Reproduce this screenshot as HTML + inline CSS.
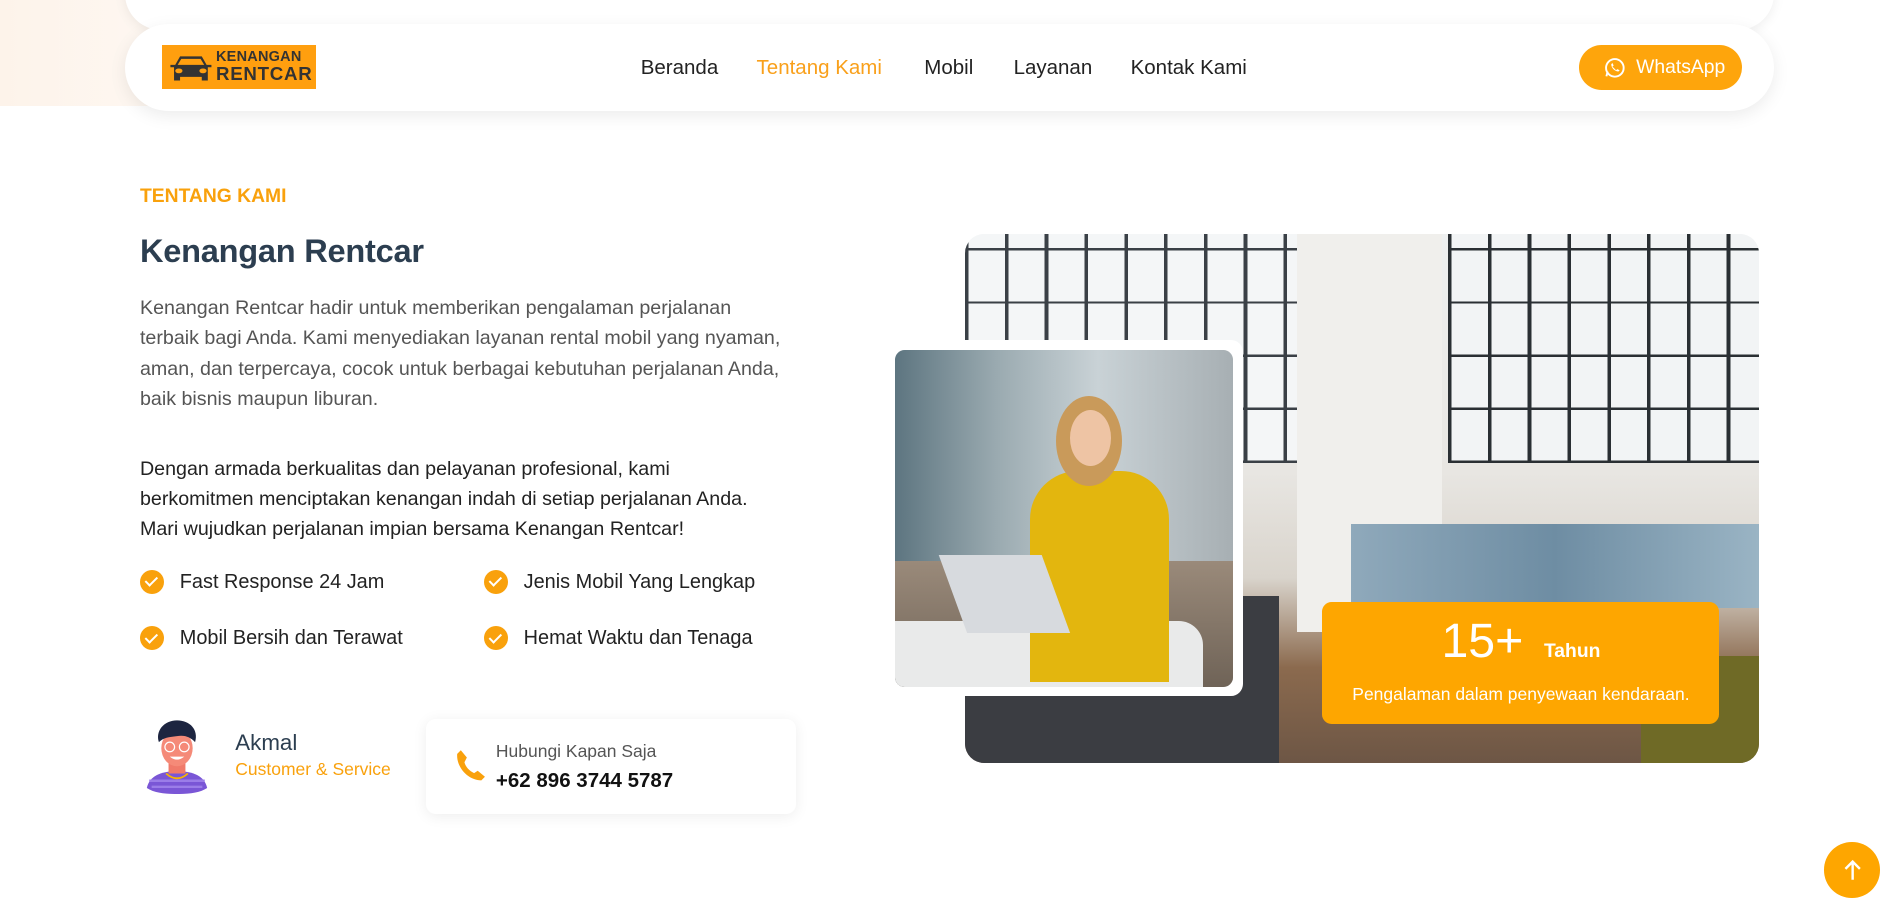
<!DOCTYPE html>
<html><head><meta charset="utf-8"><style>
*{margin:0;padding:0;box-sizing:border-box}
html,body{width:1892px;height:915px;overflow:hidden;background:#fff}
#w{zoom:1.20663;width:1568px;height:759px;position:relative;font-family:"Liberation Sans",sans-serif;overflow:hidden}
.a{position:absolute}
.nav a{position:absolute;top:46px;font-size:17px;color:#222;text-decoration:none}
.ck{position:absolute;font-size:16.5px;color:#222}
.ck i{position:absolute;left:-33px;top:-1px;width:20px;height:20px;border-radius:50%;background:#f9a10c}
.ck i:after{content:"";position:absolute;left:7px;top:4px;width:4px;height:8px;border:solid #fff;border-width:0 2px 2px 0;transform:rotate(45deg)}
</style></head><body><div id="w">
<div class="a" style="left:0;top:0;width:380px;height:88px;background:linear-gradient(90deg,#fdf3ea,#fff)"></div>
<div class="a" style="left:104px;top:-40px;width:1366px;height:65px;border-radius:30px;background:#fff;box-shadow:0 2px 10px rgba(0,0,0,.07)"></div>
<div class="a" style="left:104px;top:20px;width:1366px;height:72px;border-radius:36px;background:#fff;box-shadow:0 4px 14px rgba(0,0,0,.08)"></div>
<div class="a" style="left:134px;top:37px;width:128px;height:37px;background:#ff9f0f;overflow:hidden">
<svg class="a" style="left:5px;top:8px" width="38" height="24" viewBox="0 0 38 24"><path d="M2 9h4l4-7h18l4 7h4v2h-3v11h-5v-3H10v3H5V11H2z" fill="#333"/><path d="M11 4h16l3 5H8z" fill="#ff9f0f"/><ellipse cx="9" cy="14" rx="3" ry="2" fill="#ff9f0f"/><ellipse cx="29" cy="14" rx="3" ry="2" fill="#ff9f0f"/></svg>
<div class="a" style="left:45px;top:4px;font-size:12px;font-weight:bold;color:#333;line-height:14px;letter-spacing:0.2px">KENANGAN<br><span style="font-size:15.5px;letter-spacing:0.6px">RENTCAR</span></div></div>
<div class="nav"><a style="left:531px">Beranda</a><a style="left:627px;color:#f9a01b">Tentang Kami</a><a style="left:766px">Mobil</a><a style="left:840px">Layanan</a><a style="left:937px">Kontak Kami</a></div>
<div class="a" style="left:1309px;top:37px;width:135px;height:38px;border-radius:20px;background:#fea50c;color:#fff;font-size:16px;padding:10px 0 0 47px">WhatsApp
<svg class="a" style="left:20px;top:10px" width="18" height="18" viewBox="0 0 18 18"><circle cx="9" cy="9" r="7.3" fill="none" stroke="#fff" stroke-width="1.6"/><path d="M2 16l1-4" stroke="#fff" stroke-width="1.6"/><path d="M6 6c0 3 3 6 6 6l1-1-2-1-1 1c-1-1-2-2-3-3l1-1-1-2z" fill="#fff"/></svg></div>
<div class="a" style="left:116px;top:154px;font-size:16px;font-weight:bold;color:#f9a10c">TENTANG KAMI</div>
<div class="a" style="left:116px;top:193px;font-size:27px;font-weight:bold;color:#2c3e50;letter-spacing:-0.2px">Kenangan Rentcar</div>
<div class="a" style="left:116px;top:243px;width:570px;font-size:16.3px;line-height:25px;color:#555">Kenangan Rentcar hadir untuk memberikan pengalaman perjalanan<br>terbaik bagi Anda. Kami menyediakan layanan rental mobil yang nyaman,<br>aman, dan terpercaya, cocok untuk berbagai kebutuhan perjalanan Anda,<br>baik bisnis maupun liburan.</div>
<div class="a" style="left:116px;top:376px;width:570px;font-size:16.3px;line-height:25px;color:#222">Dengan armada berkualitas dan pelayanan profesional, kami<br>berkomitmen menciptakan kenangan indah di setiap perjalanan Anda.<br>Mari wujudkan perjalanan impian bersama Kenangan Rentcar!</div>
<div class="ck" style="left:149px;top:473px"><i></i>Fast Response 24 Jam</div>
<div class="ck" style="left:434px;top:473px"><i></i>Jenis Mobil Yang Lengkap</div>
<div class="ck" style="left:149px;top:520px"><i></i>Mobil Bersih dan Terawat</div>
<div class="ck" style="left:434px;top:520px"><i></i>Hemat Waktu dan Tenaga</div>
<svg class="a" style="left:118px;top:595px" width="58" height="63" viewBox="0 0 58 63"><path d="M4 58c2-10 12-14 25-14s23 4 25 14c-6 4-15 5-25 5S10 62 4 58z" fill="#7a56d6"/><path d="M6 52h46M8 57h42" stroke="#9b7de8" stroke-width="2"/><rect x="22" y="36" width="14" height="10" fill="#f07a6a"/><ellipse cx="29" cy="25" rx="13" ry="15" fill="#f58a78"/><path d="M14 20c-3-9 4-18 15-18s18 8 15 18c-4-4-8-6-15-5s-11 1-15 5z" fill="#1d2540"/><circle cx="23" cy="24" r="4" fill="none" stroke="#fff"/><circle cx="35" cy="24" r="4" fill="none" stroke="#fff"/><path d="M23 32q6 5 12 0z" fill="#fff"/><path d="M20 46q9 8 18 0" fill="none" stroke="#f7b500" stroke-width="1.5"/></svg>
<div class="a" style="left:195px;top:605px;font-size:18.5px;color:#2c3e50">Akmal</div>
<div class="a" style="left:195px;top:629px;font-size:14.5px;color:#f9a10c">Customer &amp; Service</div>
<div class="a" style="left:353px;top:596px;width:307px;height:79px;border-radius:8px;background:#fff;box-shadow:0 2px 12px rgba(0,0,0,.07)"></div>
<svg class="a" style="left:378px;top:621px" width="25" height="27" viewBox="0 0 25 27"><path d="M4 1l5 6-2 4c1 4 4 7 8 9l3-2 6 5-3 3C10 26 0 15 1 4z" fill="#f9a10c"/></svg>
<div class="a" style="left:411px;top:614px;font-size:14.5px;color:#555">Hubungi Kapan Saja</div>
<div class="a" style="left:411px;top:637px;font-size:17px;font-weight:bold;color:#111">+62 896 3744 5787</div>
<div class="a" style="left:800px;top:194px;width:658px;height:438px;border-radius:16px;overflow:hidden;background:linear-gradient(180deg,#eef0f0 0%,#e8e6e2 45%,#d9d4cc 65%,#8b6a4e 82%,#6d5645 100%)">
<div class="a" style="left:0;top:0;width:275px;height:190px;background:repeating-linear-gradient(90deg,#3a4046 0 3px,transparent 3px 33px),repeating-linear-gradient(0deg,#3a4046 0 2px,#f4f6f7 2px 44px)"></div>
<div class="a" style="left:275px;top:0;width:120px;height:330px;background:#f0efec"></div>
<div class="a" style="left:400px;top:0;width:258px;height:190px;background:repeating-linear-gradient(90deg,#2a2f33 0 3px,transparent 3px 33px),repeating-linear-gradient(0deg,#2a2f33 0 2px,#f2f4f5 2px 44px)"></div>
<div class="a" style="left:320px;top:240px;width:338px;height:70px;background:linear-gradient(90deg,#8fa9bb,#6e8da3,#9ab4c4)"></div>
<div class="a" style="left:0;top:300px;width:260px;height:138px;background:#3b3d42"></div>
<div class="a" style="left:560px;top:350px;width:98px;height:88px;background:#6f6a26;border-radius:40px 0 0 0"></div>
</div>
<div class="a" style="left:734px;top:282px;width:296px;height:295px;border-radius:10px;background:#fff"></div>
<div class="a" style="left:742px;top:290px;width:280px;height:279px;border-radius:8px;overflow:hidden;background:linear-gradient(90deg,#5d7580 0%,#9aaab0 30%,#c9d2d6 60%,#a7afb3 100%)">
<div class="a" style="left:0;top:175px;width:280px;height:104px;background:linear-gradient(180deg,#9a8a7a,#6f6357)"></div>
<div class="a" style="left:0;top:225px;width:255px;height:54px;background:#e9eaea;border-radius:0 20px 0 0"></div>
<div class="a" style="left:112px;top:100px;width:115px;height:175px;border-radius:40px 40px 0 0;background:#e3b60e"></div>
<div class="a" style="left:133px;top:38px;width:55px;height:75px;border-radius:50%;background:#c99a5a"></div>
<div class="a" style="left:145px;top:50px;width:34px;height:46px;border-radius:50%;background:#eec4a4"></div>
<div class="a" style="left:48px;top:170px;width:85px;height:65px;background:#d7dade;transform:skewX(20deg)"></div>
</div>
<div class="a" style="left:1096px;top:499px;width:329px;height:101px;border-radius:8px;background:#fea600;color:#fff;text-align:center">
<div style="margin-top:10px;font-size:40px;line-height:46px">15+ <span style="font-size:16px;font-weight:bold;vertical-align:0;margin-left:6px">Tahun</span></div>
<div style="font-size:14.5px;margin-top:4px">Pengalaman dalam penyewaan kendaraan.</div></div>
<div class="a" style="left:1512px;top:698px;width:46px;height:46px;border-radius:50%;background:#fea600"><svg class="a" style="left:15px;top:13px" width="16" height="20" viewBox="0 0 16 20"><path d="M8 18V3M2 9l6-6 6 6" fill="none" stroke="#fff" stroke-width="2"/></svg></div>
</div></body></html>
